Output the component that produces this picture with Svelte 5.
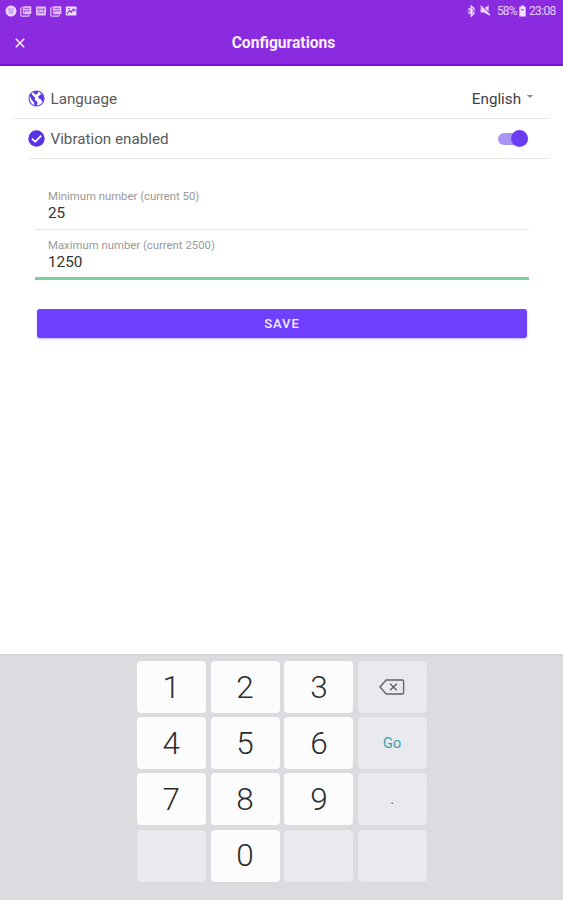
<script lang="ts">
  let vibration = $state(true)
  let minimum = $state('25')
  let maximum = $state('1250')

  const keys = [
    { label: '1' },
    { label: '2' },
    { label: '3' },
    { label: 'delete', type: 'side' },
    { label: '4' },
    { label: '5' },
    { label: '6' },
    { label: 'Go', type: 'side go' },
    { label: '7' },
    { label: '8' },
    { label: '9' },
    { label: '.', type: 'side dot' },
    { label: '', type: 'side' },
    { label: '0' },
    { label: '', type: 'side' },
    { label: '', type: 'side' },
  ]

  function press(label: string) {
    if (label === 'delete') maximum = maximum.slice(0, -1)
    else if (/^[0-9.]$/.test(label)) maximum += label
  }
</script>

{#snippet gallery()}
  <svg width="12" height="12" viewBox="0 0 12 12">
    <path d="M2.2 2.5 L.8 3.2 V10 Q.8 11.2 2 11.2 H8.5 L9.5 10" fill="none" stroke="#e3c3f7" stroke-width="1.2" />
    <rect x="2.9" y="1.2" width="8.4" height="8" rx="1" fill="#e3c3f7" />
    <path d="M4.3 3.3H9.8M4.3 7.5V5.8H9.8" fill="none" stroke="#9a48dd" stroke-width="1" />
  </svg>
{/snippet}

<div class="screen">
  <header>
    <div class="status">
      <div class="notifications">
        <svg width="12" height="12" viewBox="0 0 12 12">
          <circle cx="6" cy="6" r="5.5" fill="#ecd3fa" />
          <path d="M3 4.3q3-1 6 .3M3.4 6.2q2.6-.8 5 .3M3.8 8q2-.6 4 .3" fill="none" stroke="#b878e6" stroke-width=".9" />
        </svg>
        {@render gallery()}
        <svg width="12" height="12" viewBox="0 0 12 12">
          <rect x="1" y="1.5" width="10" height="9" rx="1" fill="#e3c3f7" />
          <path d="M3.2 3v2.5L6 4l2.8 1.5V3M2.5 8.5 4.5 7l1.5 1 1.5-1 2 1.5" fill="none" stroke="#9542dc" stroke-width="1" />
        </svg>
        {@render gallery()}
        <svg width="12" height="12" viewBox="0 0 12 12">
          <rect x=".8" y="1.5" width="10.6" height="9" rx=".8" fill="#f0dcfb" />
          <path d="M2 9 4.6 5.5 6.2 7.2 8.5 4.2 10.4 6M3.2 3.5h1.5" fill="none" stroke="#8a2be2" stroke-width="1.2" />
        </svg>
      </div>
      <div class="system">
        <svg width="9" height="12" viewBox="0 0 9 12">
          <path d="M1.5 3.3 7 8.4 4.3 11V1L7 3.6 1.5 8.7M.6 6h.8M7.4 6h.9" fill="none" stroke="#efd9fb" stroke-width="1.4" />
        </svg>
        <svg class="mute" width="11" height="11" viewBox="0 0 11 11">
          <path d="M.6 3.2H4L8.6.6V10L4 7.4H.6Z" fill="#efd9fb" />
          <path d="M1.6.6 10.6 9.4" stroke="#8a2be2" stroke-width="1.1" />
          <path d="M.6 1 9.9 10.2" stroke="#efd9fb" stroke-width="1.5" />
        </svg>
        <span class="percent">58%</span>
        <svg class="battery" width="7" height="12" viewBox="0 0 7 12">
          <path d="M2 .5H5V1.8H6.7V11.5H.3V1.8H2Z" fill="#f3e2fc" />
          <path d="M2 4.7H5" stroke="#a65ae0" stroke-width="1.3" />
        </svg>
        <span class="clock">23:08</span>
      </div>
    </div>
    <div class="toolbar">
      <button class="close" aria-label="Close">
        <svg width="10" height="10" viewBox="0 0 10 10">
          <path d="M.8.8 9.2 9.2M9.2.8.8 9.2" stroke="#f6eafd" stroke-width="1.6" />
        </svg>
      </button>
      <h1>Configurations</h1>
    </div>
  </header>

  <main>
    <div class="row language">
      <svg width="17" height="17" viewBox="0 0 17 17">
        <circle cx="8.5" cy="8.5" r="7.5" fill="#fff" stroke="#6a46e8" stroke-width="1.2" />
        <path d="M1.2 5.2 3 3.6 7.4 8.2 6.5 9.5 9.5 12.2 8.8 16 6.4 15.4 6 12.3 3.6 9.8 2.4 7Z" fill="#5a32e6" />
        <path d="M5.3 1.8 8.6.9 10.6 1.5 9.4 3.8 7.2 4.7ZM10.2 6.2 12.8 4.7 12.2 2.7 15.3 5.8 16 9.5 14.2 12 13 9.2 10.8 8.6Z" fill="#5a32e6" />
      </svg>
      <span class="name">Language</span>
      <span class="value">English</span>
      <svg class="caret" width="8" height="4" viewBox="0 0 8 4">
        <path d="M.8 0H7.2L4 3Z" fill="#8b8b8b" />
      </svg>
    </div>
    <div class="row vibration">
      <svg width="17" height="17" viewBox="0 0 17 17">
        <circle cx="8.5" cy="8.5" r="8.2" fill="#5a32e6" />
        <path d="M4 8.7 7.2 11.8 13.2 5.6" fill="none" stroke="#fff" stroke-width="1.8" />
      </svg>
      <span class="name">Vibration enabled</span>
      <button
        class="toggle"
        class:on={vibration}
        aria-label="Vibration"
        onclick={() => (vibration = !vibration)}>
        <span class="knob"></span>
      </button>
    </div>

    <form>
      <label class="field">
        <span>Minimum number (current 50)</span>
        <input bind:value={minimum} />
      </label>
      <label class="field active">
        <span>Maximum number (current 2500)</span>
        <input bind:value={maximum} />
      </label>
      <button type="button" class="save">SAVE</button>
    </form>
  </main>

  <div class="keyboard">
    {#each keys as key}
      <button class="key {key.type ?? ''}" onclick={() => press(key.label)}>
        {#if key.label === 'delete'}
          <svg width="26" height="16" viewBox="0 0 26 16">
            <path d="M1 8 7.2 1H23.5Q24.6 1 24.6 2.2V13.8Q24.6 15 23.5 15H7.2Z" fill="none" stroke="#606265" stroke-width="1.3" />
            <path d="M11.2 4.7 17.8 11.3M17.8 4.7 11.2 11.3" stroke="#606265" stroke-width="1.4" />
          </svg>
        {:else}
          {key.label}
        {/if}
      </button>
    {/each}
  </div>
</div>

<style>
  :global(body) {
    background: #fff;
  }

  .screen {
    display: flex;
    flex-direction: column;
    height: 900px;
    overflow: hidden;
    font-family: Roboto, sans-serif;
    color: #5a5a5a;
  }

  button {
    border: 0;
    padding: 0;
    font-family: inherit;
  }

  header {
    height: 66px;
    box-sizing: border-box;
    background: #8a2be0;
    border-bottom: 2px solid #7a12d2;
    flex-shrink: 0;
  }

  .status {
    display: flex;
    justify-content: space-between;
    height: 21px;
    padding: 0 7px 0 5px;
  }

  .notifications,
  .system {
    display: flex;
    align-items: center;
    gap: 3px;
  }

  .system {
    gap: 0;
    font-size: 12px;
    color: #e9cdf9;
  }

  .mute {
    margin: 0 6px 0 4px;
  }

  .percent {
    width: 20px;
    letter-spacing: -0.9px;
  }

  .battery {
    margin: 0 3px 0 2px;
  }

  .clock {
    width: 27px;
    letter-spacing: -0.65px;
  }

  .toolbar {
    display: grid;
    grid-template-columns: 40px 1fr 36px;
    align-items: center;
    height: 44px;
  }

  .close {
    display: flex;
    margin-left: 15px;
    background: none;
  }

  h1 {
    margin: 0;
    text-align: center;
    font-size: 15.6px;
    font-weight: 700;
    color: #f8effd;
  }

  main {
    flex: 1;
    padding: 13px 14px 0;
  }

  .row {
    display: flex;
    align-items: center;
    height: 39px;
    padding: 0 14px;
    border-bottom: 1px solid #e8e8e8;
    font-size: 15.2px;
  }

  .name {
    flex: 1;
    margin-left: 5.5px;
  }

  .value {
    color: #404040;
  }

  .caret {
    margin: -3px 1px 0 5px;
  }

  .vibration {
    margin-left: 14px;
    padding: 0 21px 0 0;
  }

  .toggle {
    display: flex;
    align-items: center;
    width: 30px;
    height: 12px;
    border-radius: 6px;
    background: #ccc;
  }

  .toggle.on {
    justify-content: flex-end;
    background: #a995f3;
  }

  .knob {
    width: 17px;
    height: 17px;
    border-radius: 50%;
    background: #6b3df2;
  }

  form {
    padding: 22px 20px 0 21px;
  }

  .field {
    display: block;
    height: 49px;
    padding: 8px 13px 0;
    box-sizing: border-box;
    border-bottom: 1px solid #e8e8e8;
  }

  .field.active {
    height: 50px;
    border-bottom: 3px solid #76d39e;
  }

  .field span {
    display: block;
    height: 14px;
    line-height: 14px;
    font-size: 11.35px;
    color: #999;
  }

  .field input {
    display: block;
    width: 100%;
    height: 20px;
    padding: 0;
    border: 0;
    outline: 0;
    background: none;
    font: 15.3px Roboto, sans-serif;
    color: #333;
  }

  .save {
    display: block;
    width: calc(100% - 4px);
    height: 29px;
    margin: 29px 2px 0;
    border-radius: 3px;
    background: #7040ff;
    box-shadow: 0 1px 2px #7040ff66;
    color: #f4efff;
    font-size: 13px;
    font-weight: 500;
    letter-spacing: 0.9px;
  }

  .keyboard {
    display: grid;
    grid-template-columns: repeat(4, 69px);
    grid-auto-rows: 52px;
    justify-content: center;
    gap: 4.2px 4.8px;
    height: 246px;
    padding: 6px 0 0 1px;
    box-sizing: border-box;
    border-top: 1px solid #cfd0d3;
    background: #dbdce0;
    flex-shrink: 0;
  }

  .key {
    display: flex;
    align-items: center;
    justify-content: center;
    border-radius: 4px;
    background: #fcfcfc;
    box-shadow: 0 0 1px #d0d1d4;
    color: #2c2c2c;
    font-size: 31.5px;
    font-weight: 300;
  }

  .key.side {
    padding: 0 1px 1px 0;
    background: #e8eaed;
    color: #606265;
  }

  .key.go {
    padding-bottom: 0;
    font-size: 14.5px;
    font-weight: 400;
    color: #3aa0ae;
  }

  .key.dot {
    padding-bottom: 0;
    font-size: 15px;
    font-weight: 400;
  }
</style>
